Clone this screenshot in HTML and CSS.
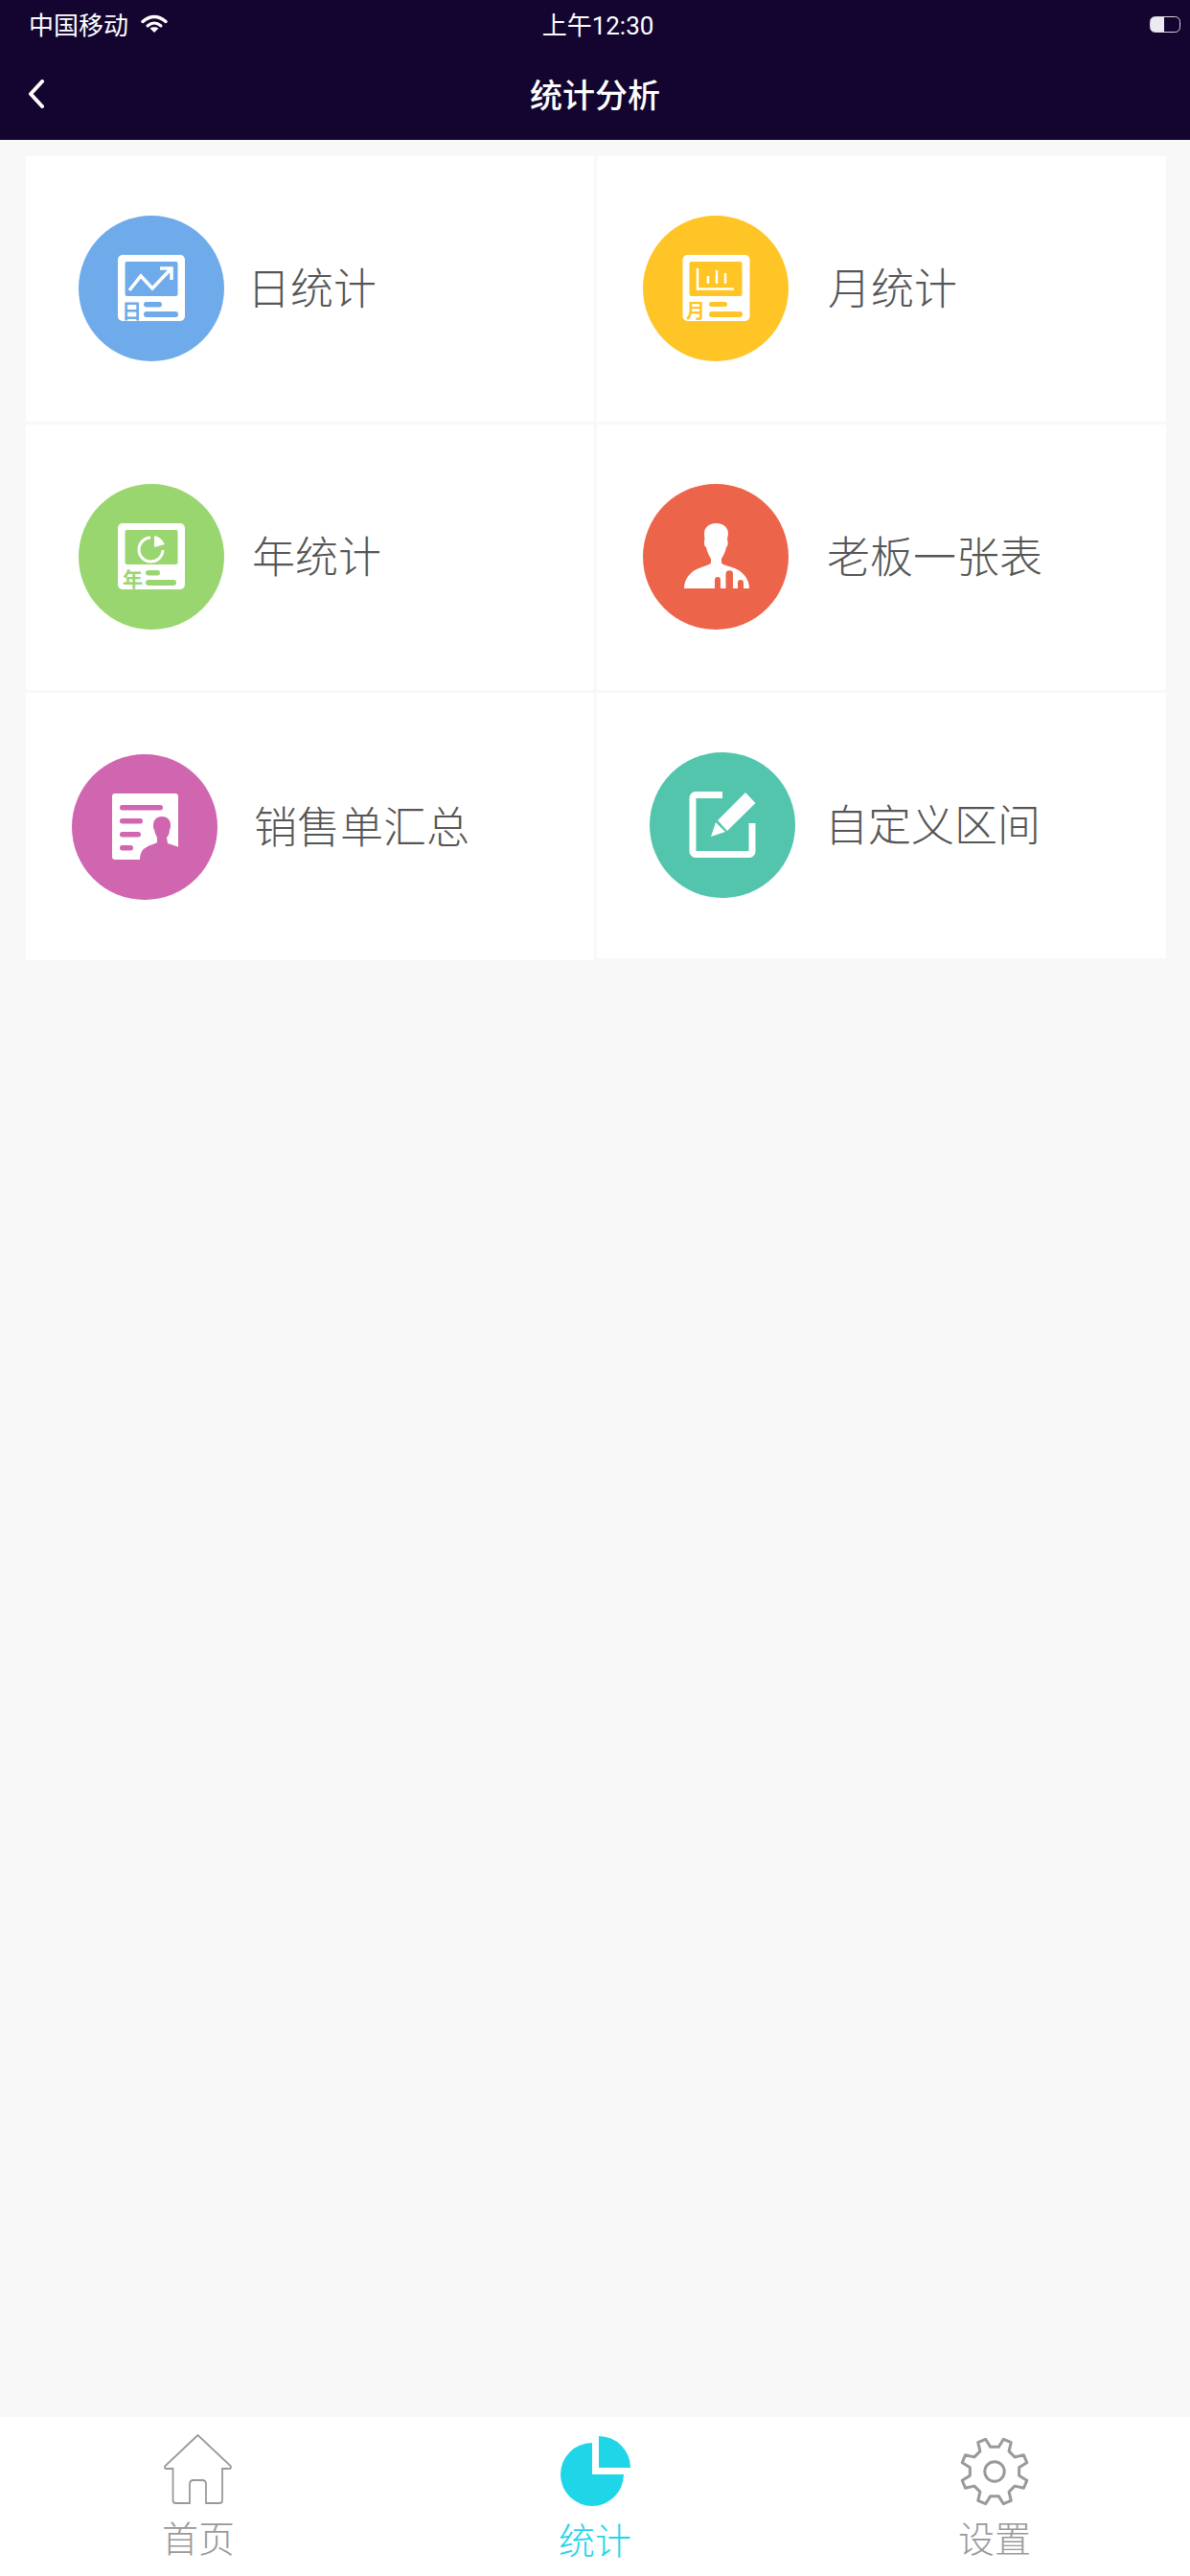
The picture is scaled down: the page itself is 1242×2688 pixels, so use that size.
FILE: index.html

```html
<!DOCTYPE html>
<html lang="zh">
<head>
  <meta charset="UTF-8">
  <title>统计分析</title>
  <link rel="stylesheet" href="styles.css">
</head>
<body>

  <header class="top">
    <div class="status">
      <div class="status-left">
        <span class="carrier">中国移动</span>
        <svg class="wifi" width="28" height="19" viewBox="0 0 28 19">
          <path d="M2 7.500 Q14 -2.500 26 7.500" fill="none" stroke="#fff" stroke-width="3.500" stroke-linecap="round"/>
          <path d="M7 12 Q14 6 21 12" fill="none" stroke="#fff" stroke-width="3" stroke-linecap="round"/>
          <path d="M9.500 14.500 Q14 12 18.500 14.500 L14 19 Z" fill="#fff"/>
        </svg>
      </div>
      <span class="clock">上午12:30</span>
      <div class="status-right">
        <svg class="battery" width="32" height="17" viewBox="0 0 32 17">
          <rect x="0.500" y="0.500" width="31" height="16" rx="5" fill="none" stroke="#d8d6de"/>
          <path d="M5 1 H15 V16 H5 A4 4 0 0 1 1 12 V5 A4 4 0 0 1 5 1 Z" fill="#eceaf0"/>
        </svg>
      </div>
    </div>
    <div class="nav">
      <svg class="back" width="18" height="30" viewBox="0 0 18 30">
        <path d="M15 2 L3 15 L15 28" fill="none" stroke="#fff" stroke-width="4" stroke-linecap="round" stroke-linejoin="round"/>
      </svg>
      <h1 class="title">统计分析</h1>
    </div>
  </header>

  <main class="content">
    <div class="grid">

      <a class="cell cell-day">
        <svg class="badge" viewBox="0 0 152 152">
          <circle cx="76" cy="76" r="76" fill="#6fabea"/>
          <rect x="41" y="41" width="70" height="69" rx="5" fill="#fff"/>
          <rect x="48.500" y="48" width="55" height="36" rx="2" fill="#6fabea"/>
          <path d="M53 78 L65 63 L77 76 L96 56 M85 55 H97 V67" fill="none" stroke="#fff" stroke-width="3.500"/>
          <text class="badge-text" x="45" y="107" font-size="21" fill="#6fabea">日</text>
          <rect x="68" y="90" width="19" height="5.500" rx="2.700" fill="#6fabea"/>
          <rect x="68" y="100" width="36" height="6" rx="3" fill="#6fabea"/>
        </svg>
        <span class="label">日统计</span>
      </a>

      <a class="cell cell-month">
        <svg class="badge" viewBox="0 0 152 152">
          <circle cx="76" cy="76" r="76" fill="#ffc425"/>
          <rect x="41.500" y="41" width="70" height="69" rx="5" fill="#fff"/>
          <rect x="48.500" y="48" width="55" height="36" rx="2" fill="#ffc425"/>
          <path d="M57 55 V76.500 H95 M68 63 V71 M77 57 V71 M86 60 V71" fill="none" stroke="#fff" stroke-width="2.500"/>
          <text class="badge-text" x="45" y="107" font-size="20" fill="#ffc425">月</text>
          <rect x="69" y="90" width="19" height="5" rx="2.500" fill="#ffc425"/>
          <rect x="69" y="100" width="35" height="6" rx="3" fill="#ffc425"/>
        </svg>
        <span class="label">月统计</span>
      </a>

      <a class="cell cell-year">
        <svg class="badge" viewBox="0 0 152 152">
          <circle cx="76" cy="76" r="76" fill="#9ad670"/>
          <rect x="41" y="41" width="70" height="69" rx="5" fill="#fff"/>
          <rect x="48.500" y="48" width="55" height="36" rx="2" fill="#9ad670"/>
          <path d="M75 56 A12.500 12.500 0 1 0 88 69" fill="none" stroke="#fff" stroke-width="3"/>
          <path d="M79 54 Q86 55 90 63 L79 66 Z" fill="#fff"/>
          <text class="badge-text" x="46" y="107" font-size="21" fill="#9ad670">年</text>
          <rect x="70" y="90" width="15" height="5.500" rx="2.700" fill="#9ad670"/>
          <rect x="70" y="100" width="32" height="6" rx="3" fill="#9ad670"/>
        </svg>
        <span class="label">年统计</span>
      </a>

      <a class="cell cell-boss">
        <svg class="badge" viewBox="0 0 152 152">
          <circle cx="76" cy="76" r="76" fill="#ec654b"/>
          <path d="M76.500 41 C68 41 64 46 64 52 L64.500 58 C63.500 60 63.500 65 66 66 C67 71 69 75 71 78 L71 82 C71 84 66 85 61 87 C50 90 43 99 43 109 L111 109 C111 99 104 90 93 87 C87 85 82 84 82 82 L82 78 C84 75 86 71 87 66 C89 65 89 60 88 58 L89 52 C89 46 85 41 76.500 41 Z" fill="#fff"/>
          <path d="M75 109 V100 A3 3 0 0 1 81 100 V109 Z M86.500 109 V94 A3.700 3.700 0 0 1 94 94 V109 Z M99 109 V103 A3 3 0 0 1 105 103 V109 Z" fill="#ec654b"/>
        </svg>
        <span class="label">老板一张表</span>
      </a>

      <a class="cell cell-sales">
        <svg class="badge" viewBox="0 0 152 152">
          <circle cx="76" cy="76" r="76" fill="#d066b0"/>
          <rect x="42" y="41" width="69" height="69" rx="3" fill="#fff"/>
          <rect x="50" y="53" width="45" height="5.500" rx="2.700" fill="#d066b0"/>
          <rect x="50" y="67" width="24" height="5.500" rx="2.700" fill="#d066b0"/>
          <rect x="50" y="81" width="22" height="5.500" rx="2.700" fill="#d066b0"/>
          <rect x="50" y="95" width="14" height="5.500" rx="2.700" fill="#d066b0"/>
          <path d="M94 65 C88 65 85 69 85 74 C85 76 85 78 86 79 C87 83 88 85 89 87 L89 92 C86 94 80 95 78 97 C73 99 71 104 71 111 L112 111 L112 97 L100 93 L99 87 C101 85 102 82 102 79 C103 77 103 76 103 74 C103 69 100 65 94 65 Z" fill="#d066b0"/>
        </svg>
        <span class="label">销售单汇总</span>
      </a>

      <a class="cell cell-range">
        <svg class="badge" viewBox="0 0 152 152">
          <circle cx="76" cy="76" r="76" fill="#53c5ac"/>
          <path d="M76 44.500 H48 A3 3 0 0 0 45 47.500 V103.500 A3 3 0 0 0 48 106.500 H104 A3 3 0 0 0 107 103.500 V74" fill="none" stroke="#fff" stroke-width="7"/>
          <path d="M100 42 L110.500 53 L81 82 L71 71 Z M69 73 L79 83 L64 88 Z" fill="#fff"/>
        </svg>
        <span class="label">自定义区间</span>
      </a>

    </div>
  </main>

  <nav class="tabs">
    <a class="tab tab-home">
      <svg class="tab-icon" width="72" height="73" viewBox="0 0 72 73">
        <path d="M35.500 1 L1.500 33 Q0 36 3 36 H9.500 V69 Q9.500 72 12.500 72 H27 V52 Q27 48 31 48 H40 Q44 48 44 52 V72 H58 Q61 72 61 69 V36 H68 Q71 36 69.500 33 Z" fill="none" stroke="#999" stroke-width="1.800"/>
      </svg>
      <span>首页</span>
    </a>
    <a class="tab tab-stats">
      <svg class="tab-icon" width="73" height="73" viewBox="0 0 73 73">
        <path d="M33 7 A33 33 0 1 0 66 40 H33 Z" fill="#1ed6e8"/>
        <path d="M40 0 A33 33 0 0 1 73 33 H40 Z" fill="#1ed6e8"/>
      </svg>
      <span>统计</span>
    </a>
    <a class="tab tab-set">
      <svg class="tab-icon" width="72" height="72" viewBox="0 0 72 72">
        <path d="M40.290 10.360 L45.350 2.270 L53.240 5.540 L51.100 14.840 L57.160 20.900 L66.460 18.760 L69.730 26.650 L61.640 31.710 L61.640 40.290 L69.730 45.350 L66.460 53.240 L57.160 51.100 L51.100 57.160 L53.240 66.460 L45.350 69.730 L40.290 61.640 L31.710 61.640 L26.650 69.730 L18.760 66.460 L20.900 57.160 L14.840 51.100 L5.540 53.240 L2.270 45.350 L10.360 40.290 L10.360 31.710 L2.270 26.650 L5.540 18.760 L14.840 20.900 L20.900 14.840 L18.760 5.540 L26.650 2.270 L31.710 10.360 Z" fill="none" stroke="#999" stroke-width="3" stroke-linejoin="round"/>
        <circle cx="36" cy="36" r="10.200" fill="none" stroke="#999" stroke-width="3"/>
      </svg>
      <span>设置</span>
    </a>
  </nav>

</body>
</html>
```

FILE: styles.css

```css
* {
  box-sizing: border-box;
}

html, body {
  margin: 0;
  padding: 0;
}

body {
  width: 1242px;
  height: 2688px;
  display: flex;
  flex-direction: column;
  background: #f8f8f8;
  font-family: "Noto Sans CJK SC", "Noto Sans", sans-serif;
  overflow: hidden;
}

/* header */
.top {
  height: 146px;
  background: #13052f;
  color: #fff;
  flex-shrink: 0;
}

.status {
  height: 48px;
  display: grid;
  grid-template-columns: 1fr auto 1fr;
  align-items: center;
  font-size: 26px;
}

.status-left {
  display: flex;
  align-items: center;
  gap: 13px;
  padding-left: 30px;
}

.clock {
  padding-left: 6px;
  font-family: "Roboto", "Noto Sans CJK SC", sans-serif;
}

.status-right {
  display: flex;
  justify-content: flex-end;
  padding-right: 10px;
}

.battery {
  margin-top: 3px;
}

.nav {
  position: relative;
  height: 98px;
  display: flex;
  align-items: center;
  justify-content: center;
}

.back {
  position: absolute;
  left: 29px;
  top: 35px;
}

.title {
  margin: 0;
  font-size: 34px;
  font-weight: 500;
}

/* cards */
.content {
  flex: 1;
  padding: 17px 25px 0 27px;
}

.grid {
  display: grid;
  grid-template-columns: 593px 594px;
  grid-template-rows: 277px 277px 279px;
  gap: 3px;
}

.cell {
  display: flex;
  align-items: center;
  background: #fff;
  padding-bottom: 1px;
}

.badge {
  width: 152px;
  height: 152px;
  flex-shrink: 0;
}

.badge-text {
  font-family: "Noto Sans CJK SC", sans-serif;
  font-weight: 700;
}

.label {
  font-size: 45px;
  font-weight: 300;
  color: #555;
  line-height: 1;
  padding-bottom: 6px;
}

.cell-day { padding-left: 55px; gap: 24px; }
.cell-month { padding-left: 48px; gap: 41px; }
.cell-year { padding-left: 55px; gap: 29px; }
.cell-boss { padding-left: 48px; gap: 40px; }
.cell-sales { padding: 1px 0 0 48px; gap: 38px; }
.cell-range { padding-left: 55px; gap: 31px; height: 277px; }

/* bottom tabs */
.tabs {
  height: 166px;
  flex-shrink: 0;
  background: #fff;
  display: grid;
  grid-template-columns: 414px 414px 414px;
}

.tab {
  display: flex;
  flex-direction: column;
  align-items: center;
  font-size: 38px;
  font-weight: 300;
  line-height: 40px;
  color: #999;
}

.tab span {
  display: block;
}

.tab-icon {
  display: block;
}

.tab-home { padding-top: 18px; gap: 14px; }
.tab-stats { padding-top: 20px; gap: 14px; color: #1ed6e8; }
.tab-set { padding: 21px 0 0 6px; gap: 12px; }
```
